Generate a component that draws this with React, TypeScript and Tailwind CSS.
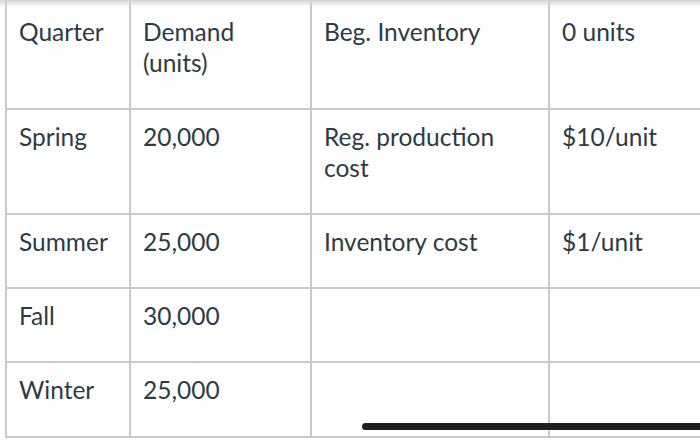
import React from "react";

const rows: [string, string, string, string][] = [
  ["Spring", "20,000", "Reg. production cost", "$10/unit"],
  ["Summer", "25,000", "Inventory cost", "$1/unit"],
  ["Fall", "30,000", "", ""],
  ["Winter", "25,000", "", ""],
];
const heights = ["h-[105px]", "h-[74px]", "h-[74px]", "h-[75px]"];

export default function App() {
  const base = "border-2 border-[#c9c9c9] align-top pl-[12px] pr-2 pb-0";
  const cell = base + " pt-[11px]";
  const head = base + " pt-[15px]";
  return (
    <div
      className="relative w-[700px] h-[443px] overflow-hidden bg-white text-[#2d3b45] text-[24.5px] leading-[31px]"
      style={{ fontFamily: "Lato, 'Open Sans', sans-serif" }}
    >
      <div className="pl-[5px] pt-0 -mt-[1px]">
        <table className="table-fixed border-collapse w-[900px]">
          <colgroup>
            <col className="w-[124px]" />
            <col className="w-[181px]" />
            <col className="w-[238px]" />
            <col className="w-[357px]" />
          </colgroup>
          <tbody>
            <tr className="h-[109px]">
              <td className={head}>Quarter</td>
              <td className={head}>
                Demand
                <br />
                (units)
              </td>
              <td className={head}>Beg. Inventory</td>
              <td className={head}>0 units</td>
            </tr>
            {rows.map((r, i) => (
              <tr key={i} className={heights[i]}>
                <td className={cell}>{r[0]}</td>
                <td className={cell}>{r[1]}</td>
                <td className={cell}>
                  {r[2] === "Reg. production cost" ? (
                    <>
                      Reg. production
                      <br />
                      cost
                    </>
                  ) : (
                    r[2]
                  )}
                </td>
                <td className={cell}>{r[3]}</td>
              </tr>
            ))}
          </tbody>
        </table>
      </div>
      <div className="absolute left-0 top-0 w-full h-[7px] bg-gradient-to-b from-[#d6d6d6] to-transparent" />
      <div className="absolute left-[362px] top-[423px] w-[360px] h-[7px] rounded-full bg-[#1f1f1f]" />
    </div>
  );
}
